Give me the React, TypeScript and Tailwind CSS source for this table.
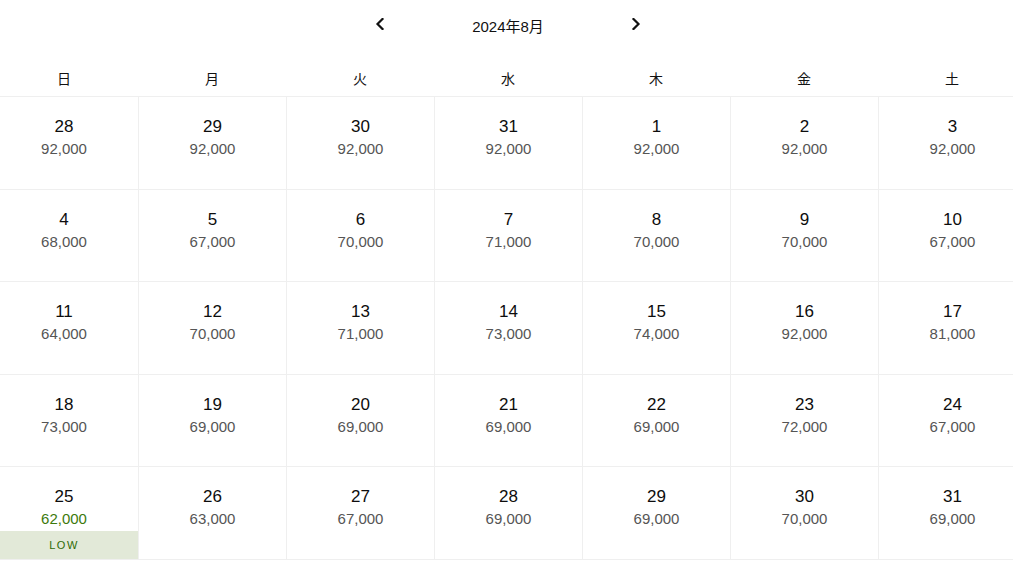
import React from "react";

type Day = { d: number; price: string; low?: boolean };

const WEEKDAYS = ["日", "月", "火", "水", "木", "金", "土"];

const DAYS: Day[] = [
  { d: 28, price: "92,000" },
  { d: 29, price: "92,000" },
  { d: 30, price: "92,000" },
  { d: 31, price: "92,000" },
  { d: 1, price: "92,000" },
  { d: 2, price: "92,000" },
  { d: 3, price: "92,000" },
  { d: 4, price: "68,000" },
  { d: 5, price: "67,000" },
  { d: 6, price: "70,000" },
  { d: 7, price: "71,000" },
  { d: 8, price: "70,000" },
  { d: 9, price: "70,000" },
  { d: 10, price: "67,000" },
  { d: 11, price: "64,000" },
  { d: 12, price: "70,000" },
  { d: 13, price: "71,000" },
  { d: 14, price: "73,000" },
  { d: 15, price: "74,000" },
  { d: 16, price: "92,000" },
  { d: 17, price: "81,000" },
  { d: 18, price: "73,000" },
  { d: 19, price: "69,000" },
  { d: 20, price: "69,000" },
  { d: 21, price: "69,000" },
  { d: 22, price: "69,000" },
  { d: 23, price: "72,000" },
  { d: 24, price: "67,000" },
  { d: 25, price: "62,000", low: true },
  { d: 26, price: "63,000" },
  { d: 27, price: "67,000" },
  { d: 28, price: "69,000" },
  { d: 29, price: "69,000" },
  { d: 30, price: "70,000" },
  { d: 31, price: "69,000" },
];

function Chevron({ dir }: { dir: "left" | "right" }) {
  return (
    <svg width="10" height="12" viewBox="0 0 10 12" fill="none">
      <path
        d={dir === "left" ? "M7.5 1 L2.5 6 L7.5 11" : "M2.5 1 L7.5 6 L2.5 11"}
        stroke="#111"
        strokeWidth="2.2"
        strokeLinecap="square"
      />
    </svg>
  );
}

export default function App() {
  return (
    <div
      className="w-[1013px] h-[569px] overflow-hidden bg-white text-[#111]"
      style={{ fontFamily: '"Liberation Sans", "Noto Sans CJK JP", sans-serif' }}
    >
      <div className="ml-[-10px] w-[1036px]">
        <div className="flex h-[56px] items-center justify-center pb-[8px]">
          <button className="flex w-6 items-center justify-center">
            <Chevron dir="left" />
          </button>
          <div className="w-[232px] pt-[6px] text-center text-[15px] leading-5">2024年8月</div>
          <button className="flex w-6 items-center justify-center">
            <Chevron dir="right" />
          </button>
        </div>

        <div className="grid h-[41px] grid-cols-7 border-b border-[#efefef] pt-[13px]">
          {WEEKDAYS.map((w) => (
            <div key={w} className="text-center text-[14px] leading-5">
              {w}
            </div>
          ))}
        </div>

        <div className="grid grid-cols-7">
          {DAYS.map((day, i) => (
            <div
              key={i}
              className={`relative flex h-[92.6px] flex-col items-center border-b border-[#efefef] pt-[19px] ${
                i % 7 !== 0 ? "border-l" : ""
              }`}
            >
              <div className="text-[17px] leading-[22px] text-[#0d0d0d]">{day.d}</div>
              <div
                className={`text-[15px] leading-[22px] ${
                  day.low ? "text-[#3d7a0c]" : "text-[#555555]"
                }`}
              >
                {day.price}
              </div>
              {day.low && (
                <div className="absolute bottom-0 left-0 right-0 flex h-[28px] items-center justify-center bg-[#e2e9d8] text-[11px] tracking-[1.5px] text-[#2f6b06]">
                  LOW
                </div>
              )}
            </div>
          ))}
        </div>
      </div>
    </div>
  );
}
